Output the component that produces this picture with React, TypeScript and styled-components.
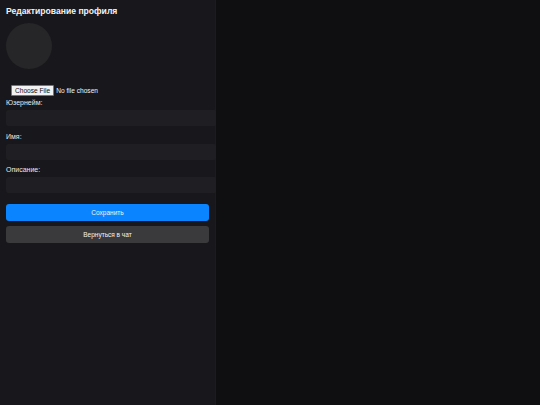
import styled, { createGlobalStyle } from "styled-components";

const GlobalStyle = createGlobalStyle`
  html, body {
    margin: 0;
    height: 100%;
    background: #0f0f11;
  }
  body {
    font-family: "Liberation Sans", Arial, sans-serif;
    color: #e8e8ea;
  }
  #root {
    height: 100%;
  }
`;

const Layout = styled.div`
  display: flex;
  height: 100%;
`;

const Sidebar = styled.aside`
  width: 216px;
  box-sizing: border-box;
  padding: 5px 6px;
  background: #18181c;
  border-right: 1px solid #1c1c20;
  display: flex;
  flex-direction: column;
`;

const Title = styled.h2`
  margin: 0;
  font-size: 8.6px;
  font-weight: 700;
  line-height: 12px;
  color: #f2f2f4;
`;

const Avatar = styled.div`
  width: 46px;
  height: 46px;
  border-radius: 50%;
  background: #262628;
  margin-top: 6px;
`;

const FileInput = styled.input`
  align-self: flex-start;
  margin: 16px 0 0 5px;
  font-size: 6.6px;
  font-family: "Liberation Sans", Arial, sans-serif;
  color: #f2f2f4;
  &::file-selector-button {
    font-size: 6.6px;
    font-family: "Liberation Sans", Arial, sans-serif;
    padding: 1px 3px;
    margin-right: 2px;
    background: #f2f2f2;
    color: #111;
    border: 1px solid #767676;
    border-radius: 1px;
  }
`;

const Field = styled.label<{ $first?: boolean }>`
  display: flex;
  flex-direction: column;
  font-size: 7px;
  line-height: 8px;
  color: #e8e8ea;
  margin-top: ${(p) => (p.$first ? "3px" : "6.5px")};
`;

const TextInput = styled.input`
  width: 211px;
  height: 16px;
  margin-top: 3px;
  box-sizing: border-box;
  border: none;
  border-radius: 3px;
  background: #1f1f23;
  color: #e8e8ea;
  font-size: 7px;
  outline: none;
`;

const Button = styled.button<{ $variant?: "primary" | "secondary" }>`
  height: 17px;
  width: 203px;
  border: none;
  border-radius: 3px;
  font-family: "Liberation Sans", Arial, sans-serif;
  font-size: 6.5px;
  color: #f2f2f4;
  background: ${(p) => (p.$variant === "secondary" ? "#3a3a3d" : "#0a84ff")};
  margin-top: ${(p) => (p.$variant === "secondary" ? "5px" : "11px")};
  cursor: pointer;
`;

const Main = styled.main`
  flex: 1;
  background: #0f0f11;
`;

export default function App() {
  return (
    <>
      <GlobalStyle />
      <Layout>
        <Sidebar>
          <Title>Редактирование профиля</Title>
          <Avatar />
          <FileInput type="file" />
          <Field $first>
            Юзернейм:
            <TextInput type="text" />
          </Field>
          <Field>
            Имя:
            <TextInput type="text" />
          </Field>
          <Field>
            Описание:
            <TextInput type="text" />
          </Field>
          <Button>Сохранить</Button>
          <Button $variant="secondary">Вернуться в чат</Button>
        </Sidebar>
        <Main />
      </Layout>
    </>
  );
}
